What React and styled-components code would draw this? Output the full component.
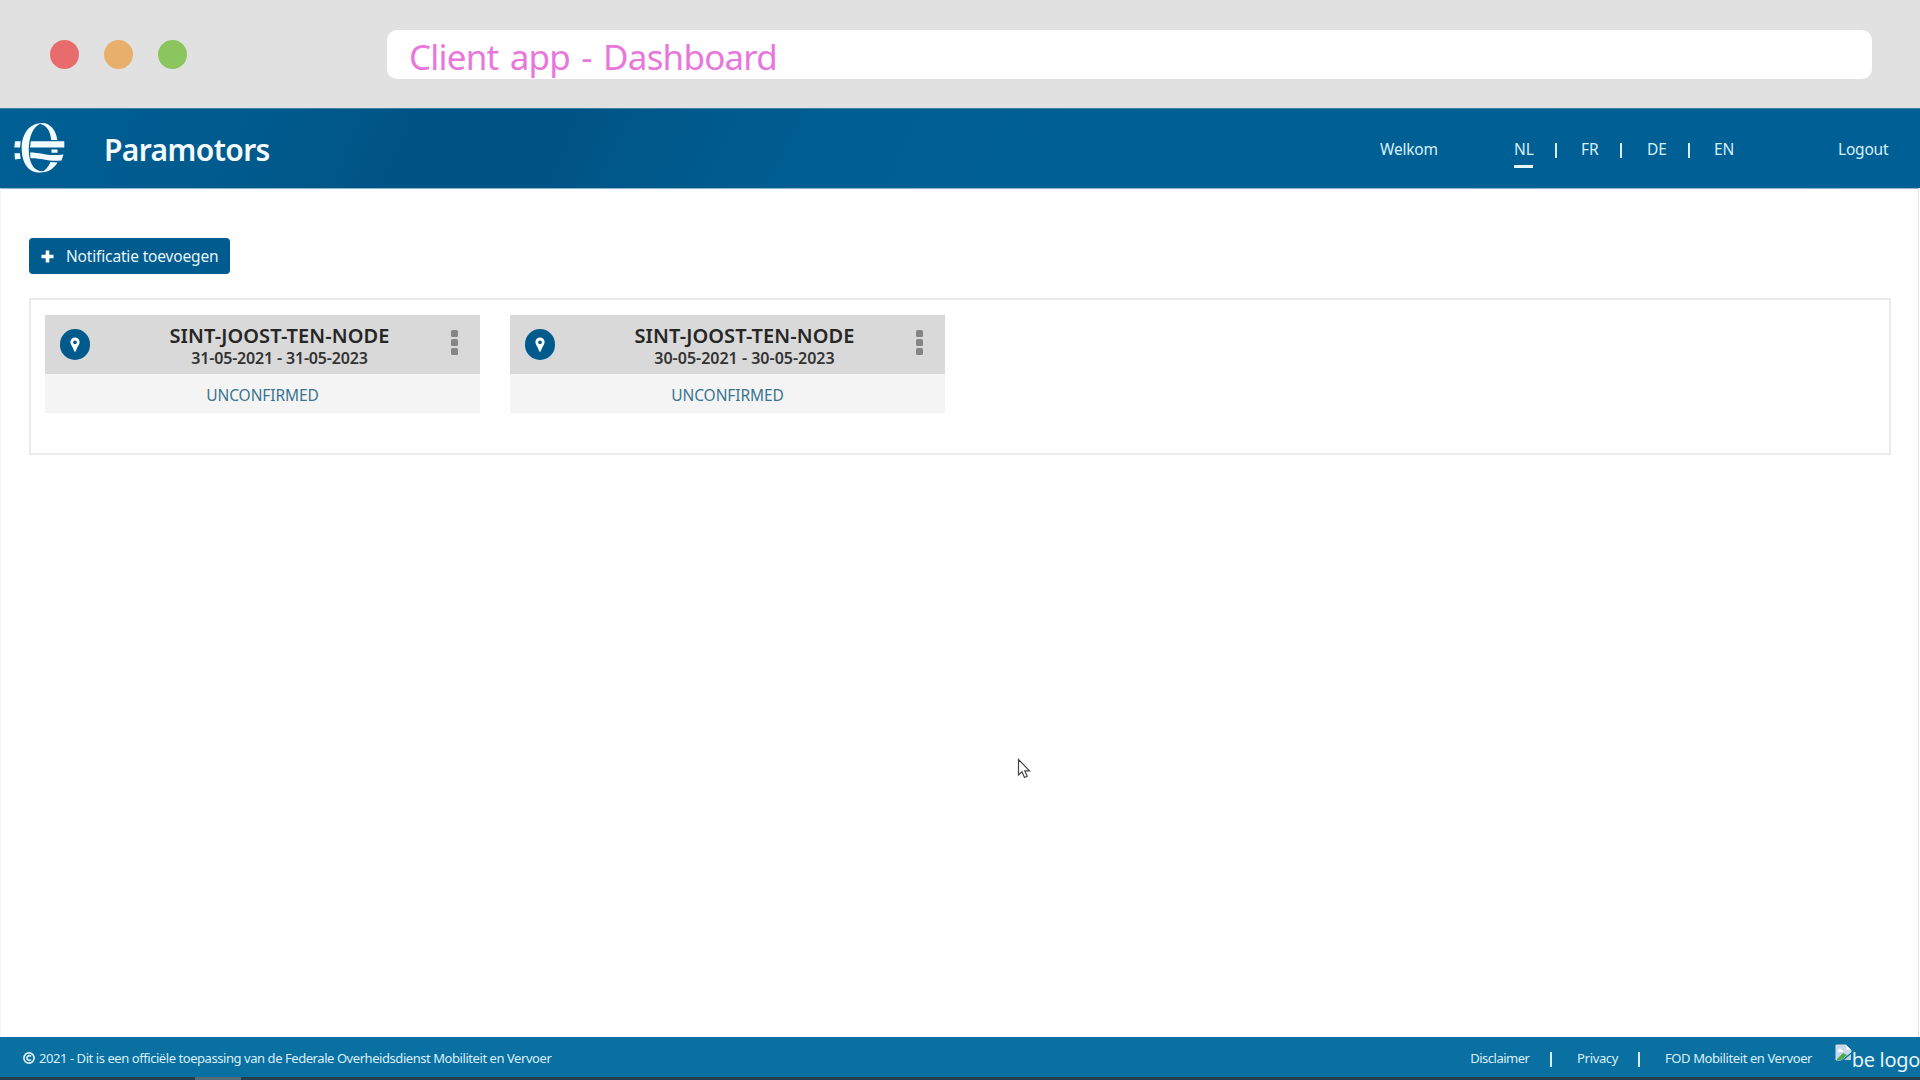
import React from 'react';
import styled, { createGlobalStyle } from 'styled-components';

const Global = createGlobalStyle`
  * { box-sizing: border-box; }
  body { margin: 0; background: #fefefe; font-family: "Noto Sans", "Open Sans", sans-serif; overflow: hidden; }
`;

const Page = styled.div`
  position: relative;
  display: flex;
  flex-direction: column;
  width: 1920px;
  height: 1080px;
  overflow: hidden;
`;

const BrowserBar = styled.div`
  display: flex;
  align-items: flex-start;
  height: 108px;
  flex: none;
  background: #e1e1e1;
`;

const Lights = styled.div`
  display: flex;
  gap: 25px;
  padding: 40px 0 0 50px;
  width: 387px;
`;

const Light = styled.span`
  width: 29px;
  height: 29px;
  border-radius: 50%;
  background: ${(p) => p.$color};
`;

const AddressField = styled.div`
  width: 1485px;
  height: 49px;
  margin-top: 30px;
  padding-left: 22px;
  border-radius: 10px;
  background: #fff;
  color: #e877dc;
  font-size: 35px;
  line-height: 54px;
  letter-spacing: -0.8px;
  word-spacing: 3px;
  white-space: nowrap;
`;

const Header = styled.header`
  display: flex;
  align-items: center;
  height: 80px;
  flex: none;
  padding-left: 14px;
  color: #f4fbff;
  background: linear-gradient(115deg, #005f94 0%, #005b8e 12%, #005384 23%, #005384 28%, #005e92 43%, #006095 100%);
  border-top: 1px solid #3c7f9f;
`;

const BrandTitle = styled.h1`
  margin: 2px 0 0 38px;
  width: 1276px;
  font-size: 30px;
  line-height: 40px;
  font-weight: 600;
  letter-spacing: -0.6px;
`;

const HeaderText = styled.a`
  width: ${(p) => p.$width}px;
  font-size: 15.5px;
  line-height: 24px;
  letter-spacing: ${(p) => p.$spacing || 0}px;
  color: #d8f0fa;
`;

const Languages = styled.nav`
  display: flex;
  align-items: center;
  width: 324px;
`;

const Language = styled.a`
  width: ${(p) => p.$width}px;
  display: flex;
  flex-direction: column;
  font-size: 15.5px;
  line-height: 24px;
  color: #d8f0fa;
  padding: 6px 0;
  &::after {
    content: "";
    width: 19px;
    height: 3px;
    margin: 4px 0 -7px;
    background: ${(p) => (p.$active ? '#e8f7fc' : 'transparent')};
  }
`;

const Divider = styled.span`
  width: 2px;
  height: 15px;
  margin: 3px ${(p) => p.$gap}px 0 0;
  background: #d8eef6;
`;

const Main = styled.main`
  display: flex;
  flex-direction: column;
  align-items: flex-start;
  flex: 1;
  margin-right: 1px;
  padding: 50px 28px 0;
  border: solid;
  border-width: 1px 1px 0;
  border-color: #8fb3c8 #e6e6e6 transparent #f5f5f5;
`;

const AddButton = styled.button`
  display: flex;
  align-items: center;
  gap: 12px;
  width: 201px;
  height: 36px;
  margin: -1px 0 0;
  padding: 0 0 0 12px;
  border: 0;
  border-radius: 4px;
  background: #005b8f;
  color: #e6f5fb;
  font-family: inherit;
  font-size: 15.5px;
  letter-spacing: -0.16px;
  white-space: nowrap;
`;

const Panel = styled.section`
  display: flex;
  gap: 30px;
  width: 1862px;
  height: 157px;
  margin-top: 24px;
  padding: 15px 14px;
  border: 2px solid #ebebeb;
  align-items: flex-start;
`;

const Card = styled.article`
  width: 435px;
  background: #f4f4f4;
`;

const CardHead = styled.div`
  display: flex;
  align-items: flex-start;
  height: 59px;
  padding: 14px 22px 0 15px;
  background: #d9d9d9;
`;

const PinBadge = styled.span`
  display: flex;
  align-items: center;
  justify-content: center;
  width: 30px;
  height: 31px;
  border-radius: 15px;
  background: #005b8c;
`;

const CardTitles = styled.div`
  display: flex;
  flex-direction: column;
  align-items: center;
  flex: 1;
  margin: -6px 0 0 29px;
`;

const Place = styled.h2`
  margin: 0;
  font-size: 20px;
  line-height: 26px;
  font-weight: 600;
  letter-spacing: 0.1px;
  color: #262626;
  white-space: nowrap;
`;

const Period = styled.p`
  margin: -2px 0 0;
  font-size: 16px;
  line-height: 22px;
  font-weight: 600;
  letter-spacing: ${(p) => p.$spacing}px;
  color: #333;
  white-space: nowrap;
`;

const MenuDots = styled.span`
  display: flex;
  flex-direction: column;
  gap: 2px;
  margin: 1px 0 0 11px;
  i {
    width: 7px;
    height: 7px;
    border-radius: 1.5px;
    background: #858585;
  }
`;

const Status = styled.div`
  height: 39px;
  font-size: 15.5px;
  line-height: 42px;
  letter-spacing: -0.1px;
  text-align: center;
  color: #3a7590;
`;

const Footer = styled.footer`
  display: flex;
  align-items: center;
  height: 40px;
  flex: none;
  padding: 1px 0 0 23px;
  background: #0a6fa1;
  color: #d9f0fa;
  font-size: 13px;
  letter-spacing: -0.44px;
  white-space: nowrap;
`;

const Copyright = styled.div`
  display: flex;
  align-items: center;
  gap: 4px;
  width: 1450px;
`;

const FooterLink = styled.a`
  width: ${(p) => p.$width}px;
  letter-spacing: ${(p) => p.$spacing}px;
`;

const BeLogo = styled.span`
  display: flex;
  align-items: flex-start;
  height: 32px;
  font-size: 20px;
  line-height: 35px;
  letter-spacing: -0.3px;
  color: #e3f4fb;
  svg { margin: 2px 0 0; flex: none; }
`;

const TaskStrip = styled.div`
  height: 3px;
  flex: none;
  padding-left: 195px;
  background: #23404f;
`;

const TaskItem = styled.div`
  width: 46px;
  height: 3px;
  background: #556c7b;
`;

const Cursor = styled.svg`
  position: absolute;
  left: 1017px;
  top: 758px;
`;

const LogoMark = styled.svg`
  margin-top: -1px;
  flex: none;
`;

const Logo = () => (
  <LogoMark width="52" height="52" viewBox="0 0 52 52" fill="#f2fbff">
    <path d="M27.500 1.200C15 1.200 7.700 12 7.700 26.500C7.700 41 14.500 51 26 50.500L30 49.300C20 50 14.800 41 14.800 28C14.800 15 19 4 27.500 1.200Z" />
    <path d="M26 1.200C36 0 42 8 43.300 18H37.200C36.500 10 33.500 4 27 2.200Z" />
    <path d="M36.500 40L43.500 40.500C40 46.500 34.500 50.500 26 50.500C31 49 34 45.500 36.500 40Z" />
    <path d="M1 19.200H6.800L6 25.400H.3ZM16.800 19.200H50.300V25.400H16ZM.5 31.300H6L6.600 36.700L1 37.500ZM16 30.500C28 30.500 32 34.500 49.500 32.500L47.500 38.500C34 40 29 36 16.500 36.300ZM37.500 27.600H43.500V30.700H37.500Z" />
  </LogoMark>
);

const Plus = () => (
  <svg width="13" height="13" viewBox="0 0 13 13" stroke="#fff" strokeWidth="3.600">
    <path d="M6.500 0.500V12.500M0.500 6.500H12.500" />
  </svg>
);

const Pin = () => (
  <svg width="10" height="15" viewBox="0 0 10 15">
    <path fill="#fff" fillRule="evenodd" d="M5 0.500A4.600 4.600 0 0 0 .4 5.100C.4 8 3 10 4 14Q5 15.500 6 14C7 10 9.600 8 9.600 5.100A4.600 4.600 0 0 0 5 .5ZM5 3.400A1.900 1.900 0 1 1 5 7.200A1.900 1.900 0 1 1 5 3.400Z" />
  </svg>
);

const CopyrightMark = () => (
  <svg width="12" height="12" viewBox="0 0 12 12" fill="none" stroke="#d9f0fa">
    <circle cx="6" cy="6" r="5.100" strokeWidth="1.700" />
    <path d="M8 4.500A2.300 2.300 0 1 0 8 7.500" strokeWidth="1.700" />
  </svg>
);

const BrokenImage = () => (
  <svg width="17" height="17" viewBox="0 0 17 17">
    <path d="M1 1H11L16 6V8L6 16H1Z" fill="#c5d8f0" stroke="#d7dde2" />
    <path d="M11 1V6H16Z" fill="#fff" stroke="#cfd6dc" strokeWidth=".8" />
    <path d="M3 6.500C3 4.500 6 4 7 6C8.500 6 8.500 8 7 8H4Q3 8 3 6.500Z" fill="#fff" />
    <path d="M2 15L8 9L12 11L6 16H2Z" fill="#4caa49" />
    <path d="M9 16L16 10V16Z" fill="#b9d4da" />
  </svg>
);

const cards = [
  { place: 'SINT-JOOST-TEN-NODE', period: '31-05-2021 - 31-05-2023', spacing: -0.17 },
  { place: 'SINT-JOOST-TEN-NODE', period: '30-05-2021 - 30-05-2023', spacing: 0 },
];

export default function App() {
  return (
    <Page>
      <Global />
      <BrowserBar>
        <Lights>
          <Light $color="#e96c6c" />
          <Light $color="#e8af6c" />
          <Light $color="#8ac55e" />
        </Lights>
        <AddressField>Client app - Dashboard</AddressField>
      </BrowserBar>
      <Header>
        <Logo />
        <BrandTitle>Paramotors</BrandTitle>
        <HeaderText $width={134} $spacing={-0.2}>Welkom</HeaderText>
        <Languages>
          <Language $width={41} $active>NL</Language>
          <Divider $gap={24} />
          <Language $width={39}>FR</Language>
          <Divider $gap={25} />
          <Language $width={41}>DE</Language>
          <Divider $gap={24} />
          <Language $width={40}>EN</Language>
        </Languages>
        <HeaderText $width={60} $spacing={-0.2}>Logout</HeaderText>
      </Header>
      <Main>
        <AddButton>
          <Plus />
          Notificatie toevoegen
        </AddButton>
        <Panel>
          {cards.map((card) => (
            <Card key={card.period}>
              <CardHead>
                <PinBadge><Pin /></PinBadge>
                <CardTitles>
                  <Place>{card.place}</Place>
                  <Period $spacing={card.spacing}>{card.period}</Period>
                </CardTitles>
                <MenuDots><i /><i /><i /></MenuDots>
              </CardHead>
              <Status>UNCONFIRMED</Status>
            </Card>
          ))}
        </Panel>
      </Main>
      <Footer>
        <Copyright>
          <CopyrightMark />
          2021 - Dit is een officiële toepassing van de Federale Overheidsdienst Mobiliteit en Vervoer
        </Copyright>
        <FooterLink $width={80} $spacing={-0.5}>Disclaimer</FooterLink>
        <Divider $gap={25} />
        <FooterLink $width={61} $spacing={-0.35}>Privacy</FooterLink>
        <Divider $gap={25} />
        <FooterLink $width={170} $spacing={-0.4}>FOD Mobiliteit en Vervoer</FooterLink>
        <BeLogo>
          <BrokenImage />
          be logo
        </BeLogo>
      </Footer>
      <TaskStrip><TaskItem /></TaskStrip>
      <Cursor width="15" height="22" viewBox="0 0 15 22">
        <path d="M1.500 1.500V17L5 13.800L7.500 19.500L10.200 18.300L7.800 12.800H12.500Z" fill="#fff" stroke="#444" strokeWidth="1.200" />
      </Cursor>
    </Page>
  );
}
